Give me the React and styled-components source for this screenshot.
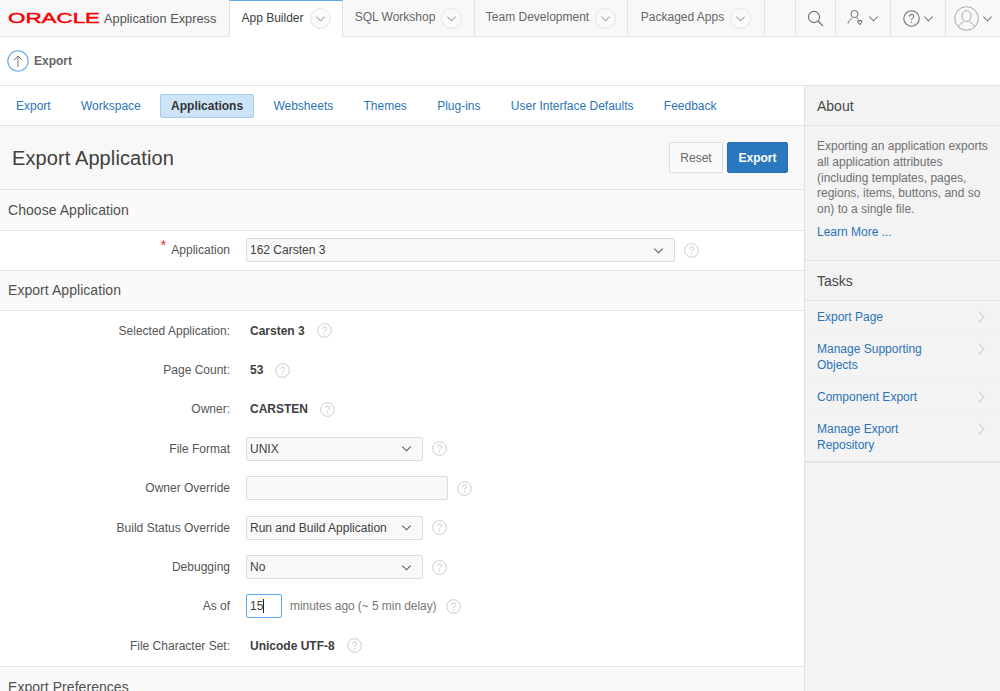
import React from 'react';
import styled, { createGlobalStyle } from 'styled-components';

const GlobalStyle = createGlobalStyle`
    html, body {
        margin: 0;
        padding: 0;
        background: #fff;
    }
    body {
        font-family: "Liberation Sans", Arial, sans-serif;
        font-size: 12px;
        color: #404040;
        overflow: hidden;
    }
    * {
        box-sizing: border-box;
    }
`;

const tabs = [
    { label: 'App Builder', width: 114, active: true },
    { label: 'SQL Workshop', width: 132 },
    { label: 'Team Development', width: 153 },
    { label: 'Packaged Apps', width: 137 },
];

const navItems = ['Export', 'Workspace', 'Applications', 'Websheets', 'Themes', 'Plug-ins', 'User Interface Defaults', 'Feedback'];

const taskItems = [
    ['Export Page'],
    ['Manage Supporting', 'Objects'],
    ['Component Export'],
    ['Manage Export', 'Repository'],
];

const Chevron = ({ size = 12, color = '#707070' }) => (
    <svg width={size} height={size} viewBox="0 0 12 12" fill="none" stroke={color} strokeWidth="1.1">
        <path d="M1.5 4l4.5 4.5L10.5 4" />
    </svg>
);

const HelpIcon = ({ size = 15, color = '#c8c8c8', text = '#c0c0c0' }) => (
    <svg width={size} height={size} viewBox="0 0 16 16" fill="none">
        <circle cx="8" cy="8" r="7.3" stroke={color} strokeWidth="1" />
        <path d="M5.9 6.2c.1-1.3 1-2 2.2-2 1.2 0 2.1.8 2.1 1.8 0 1.7-2.2 1.6-2.2 3.5" stroke={text} strokeWidth="1" />
        <circle cx="8" cy="11.6" r=".7" fill={text} />
    </svg>
);

const Help = ({ wide }) => (
    <HelpWrap $wide={wide}>
        <HelpIcon />
    </HelpWrap>
);

function Header() {
    return (
        <Top>
            <Brand>
                <svg width="93" height="20" viewBox="0 0 93 20">
                    <text
                        x="0"
                        y="15.4"
                        textLength="92"
                        lengthAdjust="spacingAndGlyphs"
                        fontFamily="'Liberation Sans', sans-serif"
                        fontSize="15"
                        fontWeight="400"
                        fill="#f80000"
                        stroke="#f80000"
                        strokeWidth=".45"
                    >
                        ORACLE
                    </text>
                </svg>
                <BrandName>Application Express</BrandName>
            </Brand>
            {tabs.map((tab) => (
                <Tab key={tab.label} $active={tab.active} $width={tab.width}>
                    <TabLabel>{tab.label}</TabLabel>
                    <TabCircle>
                        <Chevron size={11} color="#a0a0a0" />
                    </TabCircle>
                </Tab>
            ))}
            <TopSpacer />
            <TopButton $width={40}>
                <svg width="17" height="17" viewBox="0 0 17 17" fill="none" stroke="#707070" strokeWidth="1.1">
                    <circle cx="7" cy="7" r="5.6" />
                    <path d="M11 11l5 5" />
                </svg>
            </TopButton>
            <TopButton $width={55}>
                <svg width="18" height="18" viewBox="0 0 18 18" fill="none" stroke="#707070" strokeWidth="1">
                    <circle cx="7.5" cy="5" r="3.6" />
                    <path d="M1 14.5c.5-3 2.5-4 4-5M9.5 9c.8.3 1.5.7 2 1.3" />
                    <path d="M11 13.5c-1-1.5.8-2.7 1.8-1.3 1-1.4 2.8-.2 1.8 1.3l-1.8 2z" strokeWidth="1.1" />
                </svg>
                <Chevron size={11} />
            </TopButton>
            <TopButton $width={55}>
                <HelpIcon size={17} color="#707070" text="#707070" />
                <Chevron size={11} />
            </TopButton>
            <TopButton $width={54}>
                <svg width="25" height="25" viewBox="0 0 25 25" fill="none" stroke="#a8a8a8" strokeWidth="1">
                    <circle cx="12.5" cy="12.5" r="11.8" />
                    <ellipse cx="12.5" cy="10" rx="4.6" ry="5.4" />
                    <path d="M4.5 21c.8-3.5 3.8-4 5.5-5.5M20.5 21c-.8-3.5-3.8-4-5.5-5.5" />
                </svg>
                <Chevron size={11} />
            </TopButton>
        </Top>
    );
}

function Row({ label, required, wide, children }) {
    return (
        <FormRow>
            <Label>
                {required && <Required>*</Required>}
                {label}
            </Label>
            <Field>
                {children}
                <Help wide={wide} />
            </Field>
        </FormRow>
    );
}

function Select({ value, width }) {
    return (
        <SelectBox $width={width}>
            {value}
            <Chevron size={11} color="#505050" />
        </SelectBox>
    );
}

export default function App() {
    return (
        <Page>
            <GlobalStyle />
            <Header />
            <SubBar>
                <svg width="22" height="22" viewBox="0 0 22 22" fill="none">
                    <circle cx="11" cy="11" r="10.2" stroke="#62a8e8" strokeWidth="1.1" />
                    <path d="M11 17V6M7 10l4-4 4 4" stroke="#777" strokeWidth="1" />
                </svg>
                <SubTitle>Export</SubTitle>
            </SubBar>
            <Body>
                <Main>
                    <Nav>
                        {navItems.map((item) => (
                            <NavItem key={item} $active={item === 'Applications'}>{item}</NavItem>
                        ))}
                    </Nav>
                    <TitleBar>
                        <Title>Export Application</Title>
                        <Buttons>
                            <ResetButton>Reset</ResetButton>
                            <ExportButton>Export</ExportButton>
                        </Buttons>
                    </TitleBar>
                    <RegionHeader>Choose Application</RegionHeader>
                    <SingleRow>
                        <Row label="Application" required>
                            <Select value="162 Carsten 3" width={429} />
                        </Row>
                    </SingleRow>
                    <RegionHeader>Export Application</RegionHeader>
                    <Row label="Selected Application:" wide><Value>Carsten 3</Value></Row>
                    <Row label="Page Count:" wide><Value>53</Value></Row>
                    <Row label="Owner:" wide><Value>CARSTEN</Value></Row>
                    <Row label="File Format"><Select value="UNIX" width={177} /></Row>
                    <Row label="Owner Override"><TextInput /></Row>
                    <Row label="Build Status Override"><Select value="Run and Build Application" width={177} /></Row>
                    <Row label="Debugging"><Select value="No" width={177} /></Row>
                    <Row label="As of">
                        <FocusInput>15<Caret /></FocusInput>
                        <Hint>minutes ago (~ 5 min delay)</Hint>
                    </Row>
                    <Row label="File Character Set:" wide><Value>Unicode UTF-8</Value></Row>
                    <LastHeader>Export Preferences</LastHeader>
                </Main>
                <Side>
                    <SideHeader>About</SideHeader>
                    <About>
                        Exporting an application exports all application attributes (including templates, pages, regions, items, buttons, and so on) to a single file.
                        <LearnMore>Learn More ...</LearnMore>
                    </About>
                    <SideHeader>Tasks</SideHeader>
                    <TaskList>
                        {taskItems.map((lines) => (
                            <Task key={lines[0]}>
                                <span>
                                    {lines.map((line) => <TaskLine key={line}>{line}</TaskLine>)}
                                </span>
                                <svg width="9" height="14" viewBox="0 0 9 14" fill="none" stroke="#d0d0d0" strokeWidth="1.1">
                                    <path d="M1.5 1.5L7 7l-5.5 5.5" />
                                </svg>
                            </Task>
                        ))}
                    </TaskList>
                </Side>
            </Body>
        </Page>
    );
}

const Page = styled.div`
    width: 1000px;
    height: 691px;
    overflow: hidden;
    display: flex;
    flex-direction: column;
    background: #fff;
`;

const Top = styled.div`
    display: flex;
    height: 37px;
    flex: none;
    background: #f8f8f8;
    border-bottom: 1px solid #e2e2e2;
`;

const Brand = styled.div`
    width: 229px;
    flex: none;
    display: flex;
    align-items: center;
    padding-left: 8px;
    gap: 3px;
`;

const BrandName = styled.span`
    font-size: 12.8px;
    color: #555;
    white-space: nowrap;
`;

const Tab = styled.div`
    width: ${(props) => props.$width}px;
    flex: none;
    display: flex;
    align-items: center;
    justify-content: center;
    gap: 6px;
    height: ${(props) => (props.$active ? '38px' : '36px')};
    padding-bottom: ${(props) => (props.$active ? '2px' : '0')};
    white-space: nowrap;
    color: ${(props) => (props.$active ? '#404040' : '#666')};
    background: ${(props) => (props.$active ? '#fff' : 'transparent')};
    border-right: 1px solid #e2e2e2;
    border-left: ${(props) => (props.$active ? '1px solid #e2e2e2' : '0')};
    border-top: ${(props) => (props.$active ? '1px solid #5fa8ea' : '0')};
`;

const TabLabel = styled.span`
    margin-bottom: 2px;
`;

const TabCircle = styled.span`
    width: 21px;
    height: 21px;
    border-radius: 50%;
    border: 1px solid #e4e4e4;
    background: #fafafa;
    display: flex;
    align-items: center;
    justify-content: center;
`;

const TopSpacer = styled.div`
    width: 31px;
    flex: none;
    border-right: 1px solid #e2e2e2;
`;

const TopButton = styled.div`
    width: ${(props) => props.$width}px;
    flex: none;
    display: flex;
    align-items: center;
    justify-content: center;
    gap: 3px;
    border-right: 1px solid #e2e2e2;

    &:last-child {
        border-right: 0;
    }
`;

const SubBar = styled.div`
    height: 49px;
    flex: none;
    display: flex;
    align-items: center;
    padding-left: 7px;
    gap: 5px;
    background: #fff;
    border-bottom: 1px solid #e4e4e4;
`;

const SubTitle = styled.span`
    font-size: 12px;
    font-weight: 700;
    color: #666;
`;

const Body = styled.div`
    flex: 1;
    display: flex;
    min-height: 0;
`;

const Main = styled.div`
    width: 805px;
    flex: none;
    border-right: 1px solid #e2e2e2;
`;

const Nav = styled.div`
    height: 40px;
    display: flex;
    align-items: center;
    padding-left: 5px;
    gap: 8.3px;
    background: #fff;
    border-bottom: 1px solid #e2e2e2;
`;

const NavItem = styled.div`
    height: 24px;
    display: flex;
    align-items: center;
    padding: 0 10px;
    border-radius: 2px;
    white-space: nowrap;
    color: ${(props) => (props.$active ? '#333' : '#2a74b8')};
    font-weight: ${(props) => (props.$active ? 700 : 400)};
    background: ${(props) => (props.$active ? '#cde3f7' : 'transparent')};
    border: 1px solid ${(props) => (props.$active ? '#a9cbe8' : 'transparent')};
`;

const TitleBar = styled.div`
    height: 64px;
    display: flex;
    align-items: center;
    justify-content: space-between;
    padding: 0 16px 0 12px;
    background: #f8f8f8;
    border-bottom: 1px solid #e2e2e2;
`;

const Title = styled.h1`
    margin: 1px 0 0;
    font-size: 20px;
    font-weight: 400;
    letter-spacing: 0.1px;
    color: #404040;
`;

const Buttons = styled.div`
    display: flex;
    gap: 4px;
`;

const ResetButton = styled.div`
    width: 54px;
    height: 31px;
    display: flex;
    align-items: center;
    justify-content: center;
    color: #666;
    background: #fafafa;
    border: 1px solid #dcdcdc;
    border-radius: 2px;
`;

const ExportButton = styled.div`
    width: 61px;
    height: 31px;
    display: flex;
    align-items: center;
    justify-content: center;
    color: #fff;
    font-weight: 700;
    background: #2a78bd;
    border: 1px solid #2670b2;
    border-radius: 2px;
`;

const RegionHeader = styled.div`
    height: 40.5px;
    display: flex;
    align-items: center;
    padding-left: 8px;
    font-size: 14px;
    letter-spacing: 0.05px;
    color: #505050;
    background: #fafafa;
    border-bottom: 1px solid #e4e4e4;
`;

const LastHeader = styled(RegionHeader)`
    border-top: 1px solid #e4e4e4;
    height: 40px;
    align-items: flex-start;
    padding-top: 12px;
`;

const SingleRow = styled.div`
    height: 40px;
    display: flex;
    flex-direction: column;
    justify-content: center;
    border-bottom: 1px solid #e4e4e4;
`;

const FormRow = styled.div`
    height: 39.4px;
    display: grid;
    grid-template-columns: 230px 1fr;
    column-gap: 16px;
    align-items: center;
`;

const Label = styled.div`
    text-align: right;
    color: #555;
    white-space: nowrap;
`;

const Required = styled.span`
    color: #f03030;
    font-size: 15px;
    line-height: 0;
    position: relative;
    top: -4px;
    margin-right: 5px;
`;

const Field = styled.div`
    display: flex;
    align-items: center;
    min-width: 0;
`;

const Value = styled.span`
    font-weight: 700;
    color: #404040;
    margin-left: 4px;
    white-space: nowrap;
`;

const HelpWrap = styled.span`
    display: flex;
    margin-left: ${(props) => (props.$wide ? '12px' : '9px')};
`;

const SelectBox = styled.div`
    width: ${(props) => props.$width}px;
    height: 24px;
    flex: none;
    display: flex;
    align-items: center;
    justify-content: space-between;
    padding: 0 10px 0 3px;
    color: #404040;
    background: #f8f8f8;
    border: 1px solid #dcdcdc;
    border-radius: 2px;
`;

const TextInput = styled.div`
    width: 202px;
    height: 24px;
    flex: none;
    background: #f8f8f8;
    border: 1px solid #dcdcdc;
    border-radius: 2px;
`;

const FocusInput = styled.div`
    width: 36px;
    height: 24px;
    flex: none;
    display: flex;
    align-items: center;
    padding-left: 3px;
    color: #404040;
    background: #fff;
    border: 1px solid #5fa8ea;
    border-radius: 2px;
`;

const Caret = styled.span`
    width: 1px;
    height: 14px;
    background: #222;
`;

const Hint = styled.span`
    margin-left: 8px;
    letter-spacing: -0.07px;
    color: #777;
    white-space: nowrap;
`;

const Side = styled.div`
    flex: 1;
    background: #f3f3f3;
`;

const SideHeader = styled.div`
    height: 40px;
    display: flex;
    align-items: center;
    padding-left: 12px;
    font-size: 14px;
    color: #484848;
    border-bottom: 1px solid #e2e2e2;
`;

const About = styled.div`
    height: 135px;
    padding: 13px 12px 0;
    line-height: 15.8px;
    color: #707070;
    border-bottom: 1px solid #e2e2e2;
`;

const LearnMore = styled.div`
    margin-top: 7px;
    color: #2a74b8;
`;

const TaskList = styled.div`
    border-bottom: 2px solid #e4e4e4;
`;

const Task = styled.div`
    display: flex;
    align-items: flex-start;
    justify-content: space-between;
    padding: 8px 14px 7px 12px;
    color: #2a74b8;
    line-height: 16px;
    border-bottom: 1px solid #efefef;

    &:last-child {
        border-bottom: 0;
        padding-bottom: 8px;
    }

    svg {
        margin-top: 1px;
    }
`;

const TaskLine = styled.div``;
